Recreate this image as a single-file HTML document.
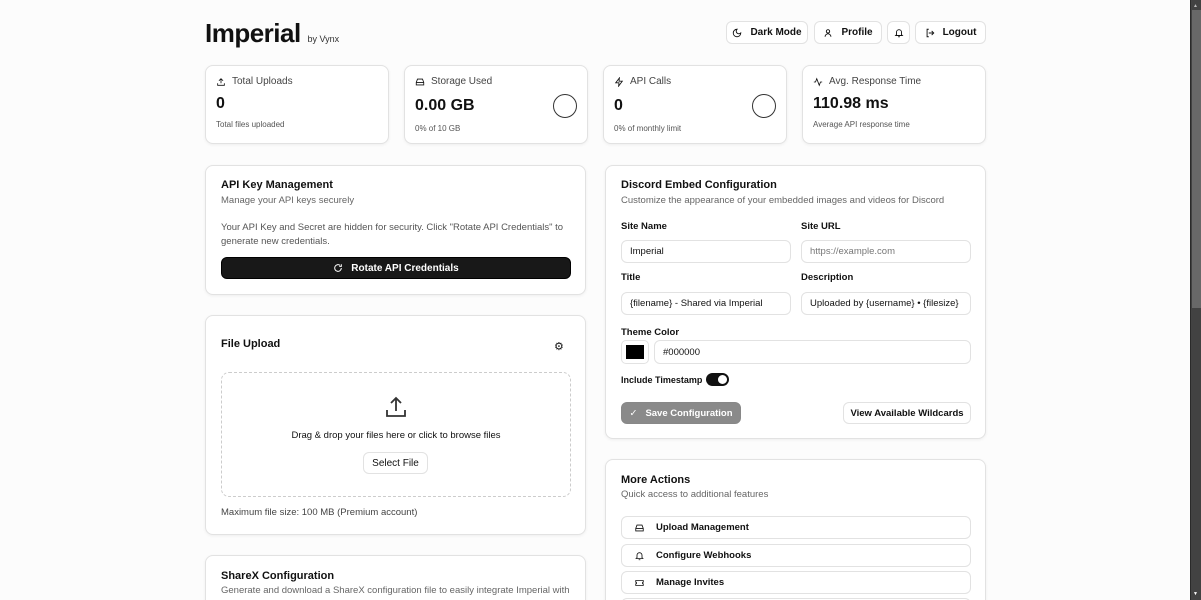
<!DOCTYPE html>
<html style="overflow:hidden"><head><meta charset="utf-8"><style>
*{box-sizing:border-box;margin:0;padding:0}
html,body{width:1201px;height:600px;overflow:hidden}
body{background:#fcfcfc;font-family:"Liberation Sans",sans-serif;color:#111;position:relative}
.a{position:absolute}
.card{position:absolute;background:#fff;border:1px solid #e2e2e2;border-radius:8px;box-shadow:0 1px 3px rgba(0,0,0,.06);overflow:hidden}
.btn{position:absolute;background:#fff;border:1px solid #e2e2e2;border-radius:6px;font-size:10px;font-weight:bold;display:flex;align-items:center;justify-content:center;gap:8px;color:#111}
.lbl{font-size:10px;color:#444;display:flex;align-items:center;gap:6px}
.big{font-size:16px;font-weight:bold}
.sm{font-size:8px;color:#555}
.h{font-size:11px;font-weight:bold}
.sub{font-size:9.5px;color:#666}
.inp{position:absolute;background:#fff;border:1px solid #e2e2e2;border-radius:6px;font-size:9.5px;padding-left:8px;display:flex;align-items:center;color:#111}
.ring{position:absolute;width:24px;height:24px;border:1.5px solid #333;border-radius:50%}
svg{display:block}
</style></head><body>
<div class="a" style="left:205px;top:18px;font-size:26px;font-weight:bold;letter-spacing:-0.5px">Imperial <span style="font-size:9px;font-weight:normal;color:#333;letter-spacing:0">by Vynx</span></div>

<div class="btn" style="left:726px;top:21px;width:82px;height:23px"><svg width="10" height="10" viewBox="0 0 24 24" fill="none" stroke="#111" stroke-width="2.2"><path d="M12 3a6 6 0 0 0 9 9 9 9 0 1 1-9-9z"/></svg>Dark Mode</div>
<div class="btn" style="left:814px;top:21px;width:68px;height:23px"><svg width="10" height="10" viewBox="0 0 24 24" fill="none" stroke="#111" stroke-width="2.2"><circle cx="12" cy="8" r="4"/><path d="M5 21a7 7 0 0 1 14 0"/></svg>Profile</div>
<div class="btn" style="left:887px;top:21px;width:23px;height:23px"><svg width="10" height="10" viewBox="0 0 24 24" fill="none" stroke="#111" stroke-width="2.2"><path d="M6 16V10a6 6 0 0 1 12 0v6l2 2H4z M10 21h4"/></svg></div>
<div class="btn" style="left:915px;top:21px;width:71px;height:23px"><svg width="10" height="10" viewBox="0 0 24 24" fill="none" stroke="#111" stroke-width="2.2"><path d="M9 21H5V3h4M16 17l5-5-5-5M21 12H9"/></svg>Logout</div>

<div class="card" style="left:205px;top:65px;width:184px;height:79px">
<div class="lbl a" style="left:10px;top:10px"><svg width="10" height="10" viewBox="0 0 24 24" fill="none" stroke="#111" stroke-width="2"><path d="M4 15v5h16v-5M12 4v11M7 9l5-5 5 5"/></svg>Total Uploads</div>
<div class="big a" style="left:10px;top:29px">0</div><div class="sm a" style="left:10px;top:54px">Total files uploaded</div></div>
<div class="card" style="left:404px;top:65px;width:184px;height:79px">
<div class="lbl a" style="left:10px;top:10px"><svg width="10" height="10" viewBox="0 0 24 24" fill="none" stroke="#111" stroke-width="2"><path d="M3 13l3-8h12l3 8v6H3zM3 13h18"/></svg>Storage Used</div>
<div class="big a" style="left:10px;top:31px">0.00 GB</div><div class="sm a" style="left:10px;top:58px">0% of 10 GB</div><div class="ring" style="left:148px;top:28px"></div></div>
<div class="card" style="left:603px;top:65px;width:184px;height:79px">
<div class="lbl a" style="left:10px;top:10px"><svg width="10" height="10" viewBox="0 0 24 24" fill="none" stroke="#111" stroke-width="2"><path d="M13 2L4 14h8l-1 8 9-12h-8z"/></svg>API Calls</div>
<div class="big a" style="left:10px;top:31px">0</div><div class="sm a" style="left:10px;top:58px">0% of monthly limit</div><div class="ring" style="left:148px;top:28px"></div></div>
<div class="card" style="left:802px;top:65px;width:184px;height:79px">
<div class="lbl a" style="left:10px;top:10px"><svg width="10" height="10" viewBox="0 0 24 24" fill="none" stroke="#111" stroke-width="2"><path d="M2 12h4l3-8 6 16 3-8h4"/></svg>Avg. Response Time</div>
<div class="big a" style="left:10px;top:29px">110.98 ms</div><div class="sm a" style="left:10px;top:54px">Average API response time</div></div>

<div class="card" style="left:205px;top:165px;width:381px;height:130px">
<div class="h a" style="left:15px;top:13px">API Key Management</div>
<div class="sub a" style="left:15px;top:29px">Manage your API keys securely</div>
<div class="sub a" style="left:15px;top:55px;width:355px;line-height:14px;color:#555">Your API Key and Secret are hidden for security. Click "Rotate API Credentials" to generate new credentials.</div>
<div class="btn" style="left:15px;top:91px;width:350px;height:22px;background:#181818;color:#fff;border-color:#000"><svg width="10" height="10" viewBox="0 0 24 24" fill="none" stroke="#fff" stroke-width="2.4"><path d="M20 12a8 8 0 1 1-3-6.2M20 3v5h-5"/></svg>Rotate API Credentials</div></div>

<div class="card" style="left:205px;top:315px;width:381px;height:220px">
<div class="h a" style="left:15px;top:22px">File Upload</div>
<div class="a" style="left:348px;top:24px;font-size:11px">⚙</div>
<div class="a" style="left:15px;top:56px;width:350px;height:125px;border:1.5px dashed #ccc;border-radius:8px">
<svg class="a" style="left:162px;top:22px" width="24" height="24" viewBox="0 0 24 24" fill="none" stroke="#333" stroke-width="1.8"><path d="M3 15v6h18v-6M12 3v13M7 8l5-5 5 5"/></svg>
<div class="a" style="left:0;width:100%;top:57px;text-align:center;font-size:9.5px">Drag &amp; drop your files here or click to browse files</div>
<div class="btn" style="left:141px;top:79px;width:65px;height:22px;font-weight:normal">Select File</div></div>
<div class="sub a" style="left:15px;top:191px;color:#444">Maximum file size: 100 MB (Premium account)</div></div>

<div class="card" style="left:205px;top:555px;width:381px;height:60px">
<div class="h a" style="left:15px;top:14px">ShareX Configuration</div>
<div class="sub a" style="left:15px;top:29px">Generate and download a ShareX configuration file to easily integrate Imperial with</div></div>

<div class="card" style="left:605px;top:165px;width:381px;height:274px">
<div class="h a" style="left:15px;top:13px">Discord Embed Configuration</div>
<div class="sub a" style="left:15px;top:29px">Customize the appearance of your embedded images and videos for Discord</div>
<div class="a" style="left:15px;top:55px;font-size:9.5px;font-weight:bold">Site Name</div>
<div class="a" style="left:195px;top:55px;font-size:9.5px;font-weight:bold">Site URL</div>
<div class="inp" style="left:15px;top:74px;width:170px;height:23px">Imperial</div>
<div class="inp" style="left:195px;top:74px;width:170px;height:23px;color:#777">https://example.com</div>
<div class="a" style="left:15px;top:106px;font-size:9.5px;font-weight:bold">Title</div>
<div class="a" style="left:195px;top:106px;font-size:9.5px;font-weight:bold">Description</div>
<div class="inp" style="left:15px;top:126px;width:170px;height:23px">{filename} - Shared via Imperial</div>
<div class="inp" style="left:195px;top:126px;width:170px;height:23px">Uploaded by {username} • {filesize}</div>
<div class="a" style="left:15px;top:161px;font-size:9.5px;font-weight:bold">Theme Color</div>
<div class="a" style="left:15px;top:174px;width:28px;height:24px;border:1px solid #e2e2e2;border-radius:5px;padding:4px 4px"><div style="background:#000;width:100%;height:100%"></div></div>
<div class="inp" style="left:48px;top:174px;width:317px;height:24px">#000000</div>
<div class="a" style="left:15px;top:209px;font-size:9px;font-weight:bold">Include Timestamp</div>
<div class="a" style="left:100px;top:207px;width:23px;height:13px;background:#111;border-radius:7px"><div class="a" style="right:2px;top:2px;width:9px;height:9px;background:#fff;border-radius:50%"></div></div>
<div class="btn" style="left:15px;top:236px;width:120px;height:22px;background:#8a8a8a;color:#fff;border-color:#888;font-size:9.5px"><span style="font-weight:normal">✓</span>Save Configuration</div>
<div class="btn" style="left:237px;top:236px;width:128px;height:22px;font-size:9.5px">View Available Wildcards</div></div>

<div class="card" style="left:605px;top:459px;width:381px;height:160px">
<div class="h a" style="left:15px;top:14px">More Actions</div>
<div class="sub a" style="left:15px;top:29px">Quick access to additional features</div>
<div class="btn" style="left:15px;top:56px;width:350px;height:23px;justify-content:flex-start;padding-left:12px;gap:11px;font-size:9.5px"><svg width="11" height="10" viewBox="0 0 24 24" fill="none" stroke="#111" stroke-width="2"><path d="M3 13l3-8h12l3 8v6H3zM3 13h18"/></svg>Upload Management</div>
<div class="btn" style="left:15px;top:84px;width:350px;height:23px;justify-content:flex-start;padding-left:12px;gap:11px;font-size:9.5px"><svg width="11" height="10" viewBox="0 0 24 24" fill="none" stroke="#111" stroke-width="2"><path d="M6 16V10a6 6 0 0 1 12 0v6l2 2H4z M10 21h4"/></svg>Configure Webhooks</div>
<div class="btn" style="left:15px;top:111px;width:350px;height:23px;justify-content:flex-start;padding-left:12px;gap:11px;font-size:9.5px"><svg width="11" height="10" viewBox="0 0 24 24" fill="none" stroke="#111" stroke-width="2"><path d="M3 6h18v4a2 2 0 0 0 0 4v4H3v-4a2 2 0 0 0 0-4z"/></svg>Manage Invites</div>
<div class="btn" style="left:15px;top:138px;width:350px;height:23px"></div></div>

<div class="a" style="left:1190px;top:0;width:11px;height:600px;background:#424242;border-left:1px solid #2a2a2a"></div>
<div class="a" style="left:1192px;top:10px;width:9px;height:298px;background:#686868"></div>
<div class="a" style="left:1193px;top:3px;font-size:5px;color:#bbb">▲</div>
<div class="a" style="left:1193px;top:591px;font-size:5px;color:#fff">▼</div>
</body></html>
